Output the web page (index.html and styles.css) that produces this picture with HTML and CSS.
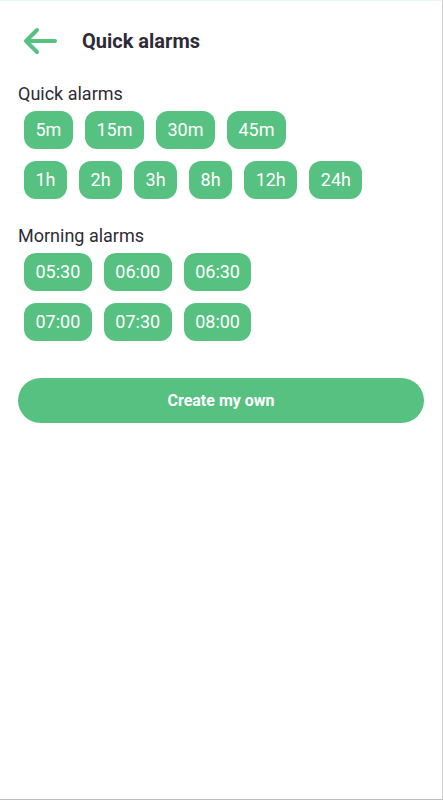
FILE: index.html
```html
<!DOCTYPE html>
<html lang="en">

<head>
    <meta charset="UTF-8">
    <meta name="viewport" content="width=device-width, initial-scale=1.0">
    <title>Quick alarms</title>
    <link rel="stylesheet" href="styles.css">
</head>

<body>
    <div class="screen">
        <div class="header">
            <svg class="back" width="36" height="28" viewBox="0 0 36 28">
                <path d="M33 14H4M15 3L4 14L15 25" fill="none" stroke="#56c180" stroke-width="4"
                    stroke-linecap="round" stroke-linejoin="round" />
            </svg>
            <h1>Quick alarms</h1>
        </div>

        <div class="section">
            <div class="label">Quick alarms</div>
            <div class="chips">
                <div class="chip">5m</div>
                <div class="chip">15m</div>
                <div class="chip">30m</div>
                <div class="chip">45m</div>
            </div>
            <div class="chips">
                <div class="chip">1h</div>
                <div class="chip">2h</div>
                <div class="chip">3h</div>
                <div class="chip">8h</div>
                <div class="chip">12h</div>
                <div class="chip">24h</div>
            </div>
        </div>

        <div class="section">
            <div class="label">Morning alarms</div>
            <div class="chips">
                <div class="chip">05:30</div>
                <div class="chip">06:00</div>
                <div class="chip">06:30</div>
            </div>
            <div class="chips">
                <div class="chip">07:00</div>
                <div class="chip">07:30</div>
                <div class="chip">08:00</div>
            </div>
        </div>

        <button class="create">Create my own</button>
    </div>
</body>

</html>
```

FILE: styles.css
```css
body {
    margin: 0;
    font-family: Roboto, "Liberation Sans", sans-serif;
    background-color: #ffffff;
    color: #2e2b36;
}

.screen {
    height: 800px;
    box-sizing: border-box;
    border-top: 1px solid #e3f6ef;
    border-right: 1px solid #cfcfcf;
    border-bottom: 1px solid #bdbdbd;
    padding: 0 18px;
}

.header {
    display: flex;
    align-items: center;
    height: 79px;
    padding-left: 4px;
}

.back {
    display: block;
}

.header h1 {
    margin: 0 0 0 24px;
    font-size: 20px;
    font-weight: 700;
    color: #2e2b36;
}

.section {
    margin-top: 4px;
}

.section + .section {
    margin-top: 27px;
}

.label {
    font-size: 18px;
    line-height: 20px;
    color: #2e2b36;
    margin-bottom: 7px;
}

.chips {
    display: flex;
    gap: 12px;
    padding-left: 6px;
}

.chips + .chips {
    margin-top: 12px;
}

.chip {
    height: 38px;
    line-height: 38px;
    padding: 0 11.5px;
    border-radius: 12px;
    background-color: #56c180;
    color: #ffffff;
    font-size: 18px;
}

.create {
    display: block;
    width: 100%;
    height: 45px;
    margin-top: 37px;
    border: none;
    border-radius: 23px;
    background-color: #56c180;
    color: #ffffff;
    font-family: Roboto, "Liberation Sans", sans-serif;
    font-size: 16px;
    font-weight: 700;
}
```
